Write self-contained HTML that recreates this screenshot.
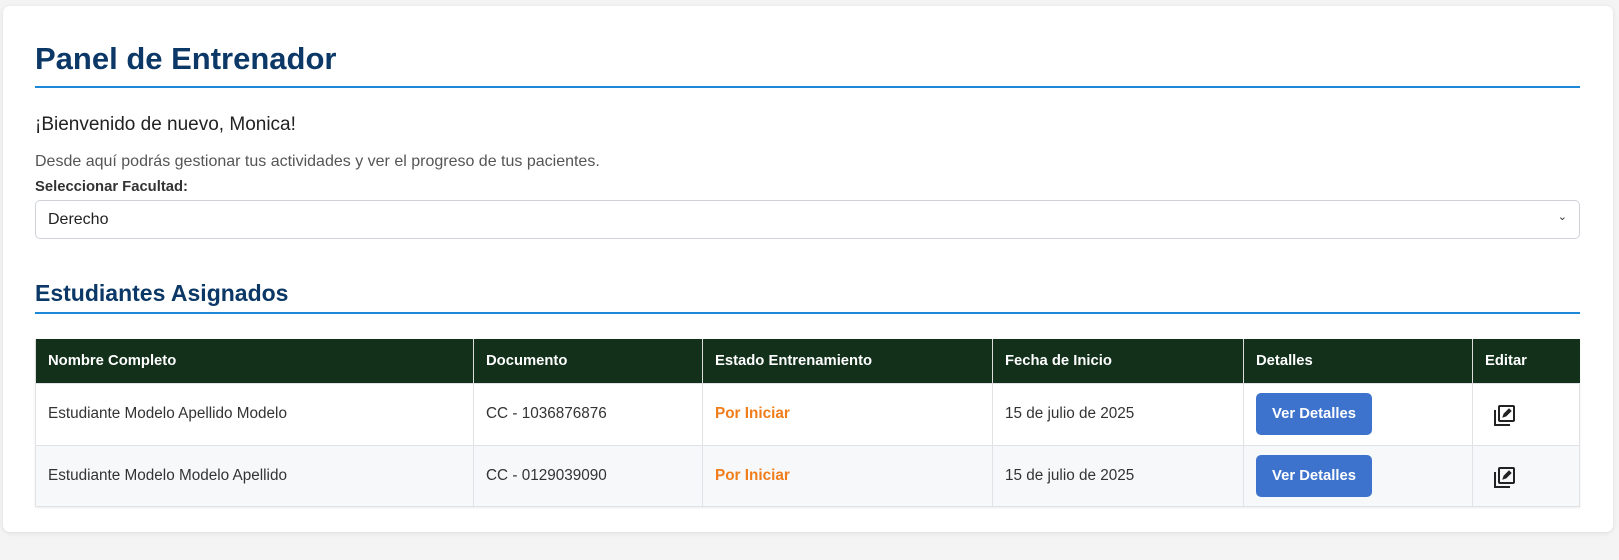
<!DOCTYPE html>
<html><head><meta charset="utf-8"><style>
*{box-sizing:border-box;margin:0;padding:0}
body{width:1619px;height:560px;background:#f3f4f3;font-family:"Liberation Sans",Arial,sans-serif;position:relative;overflow:hidden}
.card{position:absolute;left:3px;top:6px;width:1610px;height:526px;background:#fff;border-radius:7px;box-shadow:0 1px 5px rgba(0,0,0,.1)}
.a{position:absolute;left:32px;white-space:nowrap}
h1{position:absolute;left:32px;top:35px;font-size:31px;font-weight:bold;color:#0b3866}
.line{position:absolute;left:32px;width:1545px;height:2px;background:#1e88d8}
h2{position:absolute;left:32px;top:274px;font-size:23px;font-weight:bold;color:#0b3866}
.sel{position:absolute;left:32px;top:194px;width:1545px;height:39px;border:1px solid #cfd3d8;border-radius:5px;font-size:16px;color:#222;padding:10px 0 0 12px}
.sel span{position:absolute;right:12px;top:9px;font-size:11px;color:#333}
table{position:absolute;left:32px;top:333px;width:1545px;border-collapse:collapse;font-size:15.3px;box-shadow:0 1px 2px rgba(0,0,0,.08)}
th{background:#12301a;color:#fff;text-align:left;height:44px;padding:0 12px;font-weight:bold;border-left:1px solid #ddd;font-size:14.8px}
td{height:62px;padding:0 12px;color:#333;border:1px solid #e0e2e5}
tr:nth-child(3) td{background:#f7f8fa;height:61px}
.o{color:#f07d1a;font-weight:bold}
.btn{display:inline-block;width:116px;height:42px;line-height:42px;text-align:center;background:#3d73cc;color:#fff;border-radius:5px;font-weight:bold;font-size:14.8px}
td svg{margin-left:8px;margin-top:4px;display:block}
</style></head><body>
<div class="card">
<h1>Panel de Entrenador</h1>
<div class="line" style="top:80px"></div>
<div class="a" style="top:108px;font-size:19px;color:#222">¡Bienvenido de nuevo, Monica!</div>
<div class="a" style="top:147px;font-size:16px;color:#555">Desde aquí podrás gestionar tus actividades y ver el progreso de tus pacientes.</div>
<div class="a" style="top:173px;font-size:14.8px;font-weight:bold;color:#333">Seleccionar Facultad:</div>
<div class="sel">Derecho<span>⌄</span></div>
<h2>Estudiantes Asignados</h2>
<div class="line" style="top:306px"></div>
<table>
<tr><th style="width:438px">Nombre Completo</th><th style="width:229px">Documento</th><th style="width:290px">Estado Entrenamiento</th><th style="width:251px">Fecha de Inicio</th><th style="width:229px">Detalles</th><th>Editar</th></tr>
<tr><td>Estudiante Modelo Apellido Modelo</td><td>CC - 1036876876</td><td class="o">Por Iniciar</td><td>15 de julio de 2025</td><td><span class="btn">Ver Detalles</span></td><td><svg width="22" height="22" viewBox="0 0 22 22" fill="none" stroke="#222" stroke-width="2"><path d="M2 5v15h15"/><rect x="6" y="1" width="15" height="15" rx="1"/><path d="M10 12l1-3 5-5 2 2-5 5z" fill="#222" stroke-width="1"/></svg></td></tr>
<tr><td>Estudiante Modelo Modelo Apellido</td><td>CC - 0129039090</td><td class="o">Por Iniciar</td><td>15 de julio de 2025</td><td><span class="btn">Ver Detalles</span></td><td><svg width="22" height="22" viewBox="0 0 22 22" fill="none" stroke="#222" stroke-width="2"><path d="M2 5v15h15"/><rect x="6" y="1" width="15" height="15" rx="1"/><path d="M10 12l1-3 5-5 2 2-5 5z" fill="#222" stroke-width="1"/></svg></td></tr>
</table>
</div>
</body></html>
